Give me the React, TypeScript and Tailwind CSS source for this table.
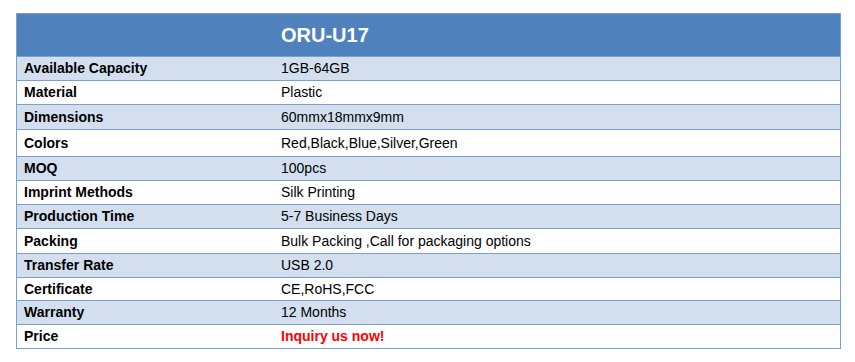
const rows: { label: string; value: string; h: string; band: boolean; red?: boolean }[] = [
  { label: 'Available Capacity', value: '1GB-64GB', h: 'h-[24px]', band: true },
  { label: 'Material', value: 'Plastic', h: 'h-[24px]', band: false },
  { label: 'Dimensions', value: '60mmx18mmx9mm', h: 'h-[25px]', band: true },
  { label: 'Colors', value: 'Red,Black,Blue,Silver,Green', h: 'h-[27px]', band: false },
  { label: 'MOQ', value: '100pcs', h: 'h-[24px]', band: true },
  { label: 'Imprint Methods', value: 'Silk Printing', h: 'h-[24px]', band: false },
  { label: 'Production Time', value: '5-7 Business Days', h: 'h-[24px]', band: true },
  { label: 'Packing', value: 'Bulk Packing ,Call for packaging options', h: 'h-[25px]', band: false },
  { label: 'Transfer Rate', value: 'USB 2.0', h: 'h-[24px]', band: true },
  { label: 'Certificate', value: 'CE,RoHS,FCC', h: 'h-[23px]', band: false },
  { label: 'Warranty', value: '12 Months', h: 'h-[24px]', band: true },
  { label: 'Price', value: 'Inquiry us now!', h: 'h-[24px]', band: false, red: true },
];

export default function App() {
  return (
    <div className="h-[362px] w-[855px] bg-white pl-[16px] pt-[13px] font-['Liberation_Sans',Arial,sans-serif] text-[14px] text-black">
      <div className="w-[825px] border-x border-t border-[#7ba0cd]">
        <div className="flex h-[43px] items-center border-b border-[#7ba0cd] bg-[#4f81bd]">
          <div className="w-[257px] shrink-0" />
          <div className="pl-[7px] text-[20px] font-bold text-white">ORU-U17</div>
        </div>
        {rows.map((row) => (
          <div
            key={row.label}
            className={`flex items-center border-b border-[#7ba0cd] ${row.h} ${
              row.band ? 'bg-[#d3dfee]' : 'bg-white'
            }`}
          >
            <div className="w-[257px] shrink-0 pl-[7px] font-bold">{row.label}</div>
            <div
              className={`whitespace-pre pl-[7px] ${
                row.red ? 'font-bold text-[#ff0000]' : ''
              }`}
            >
              {row.value}
            </div>
          </div>
        ))}
      </div>
    </div>
  );
}
